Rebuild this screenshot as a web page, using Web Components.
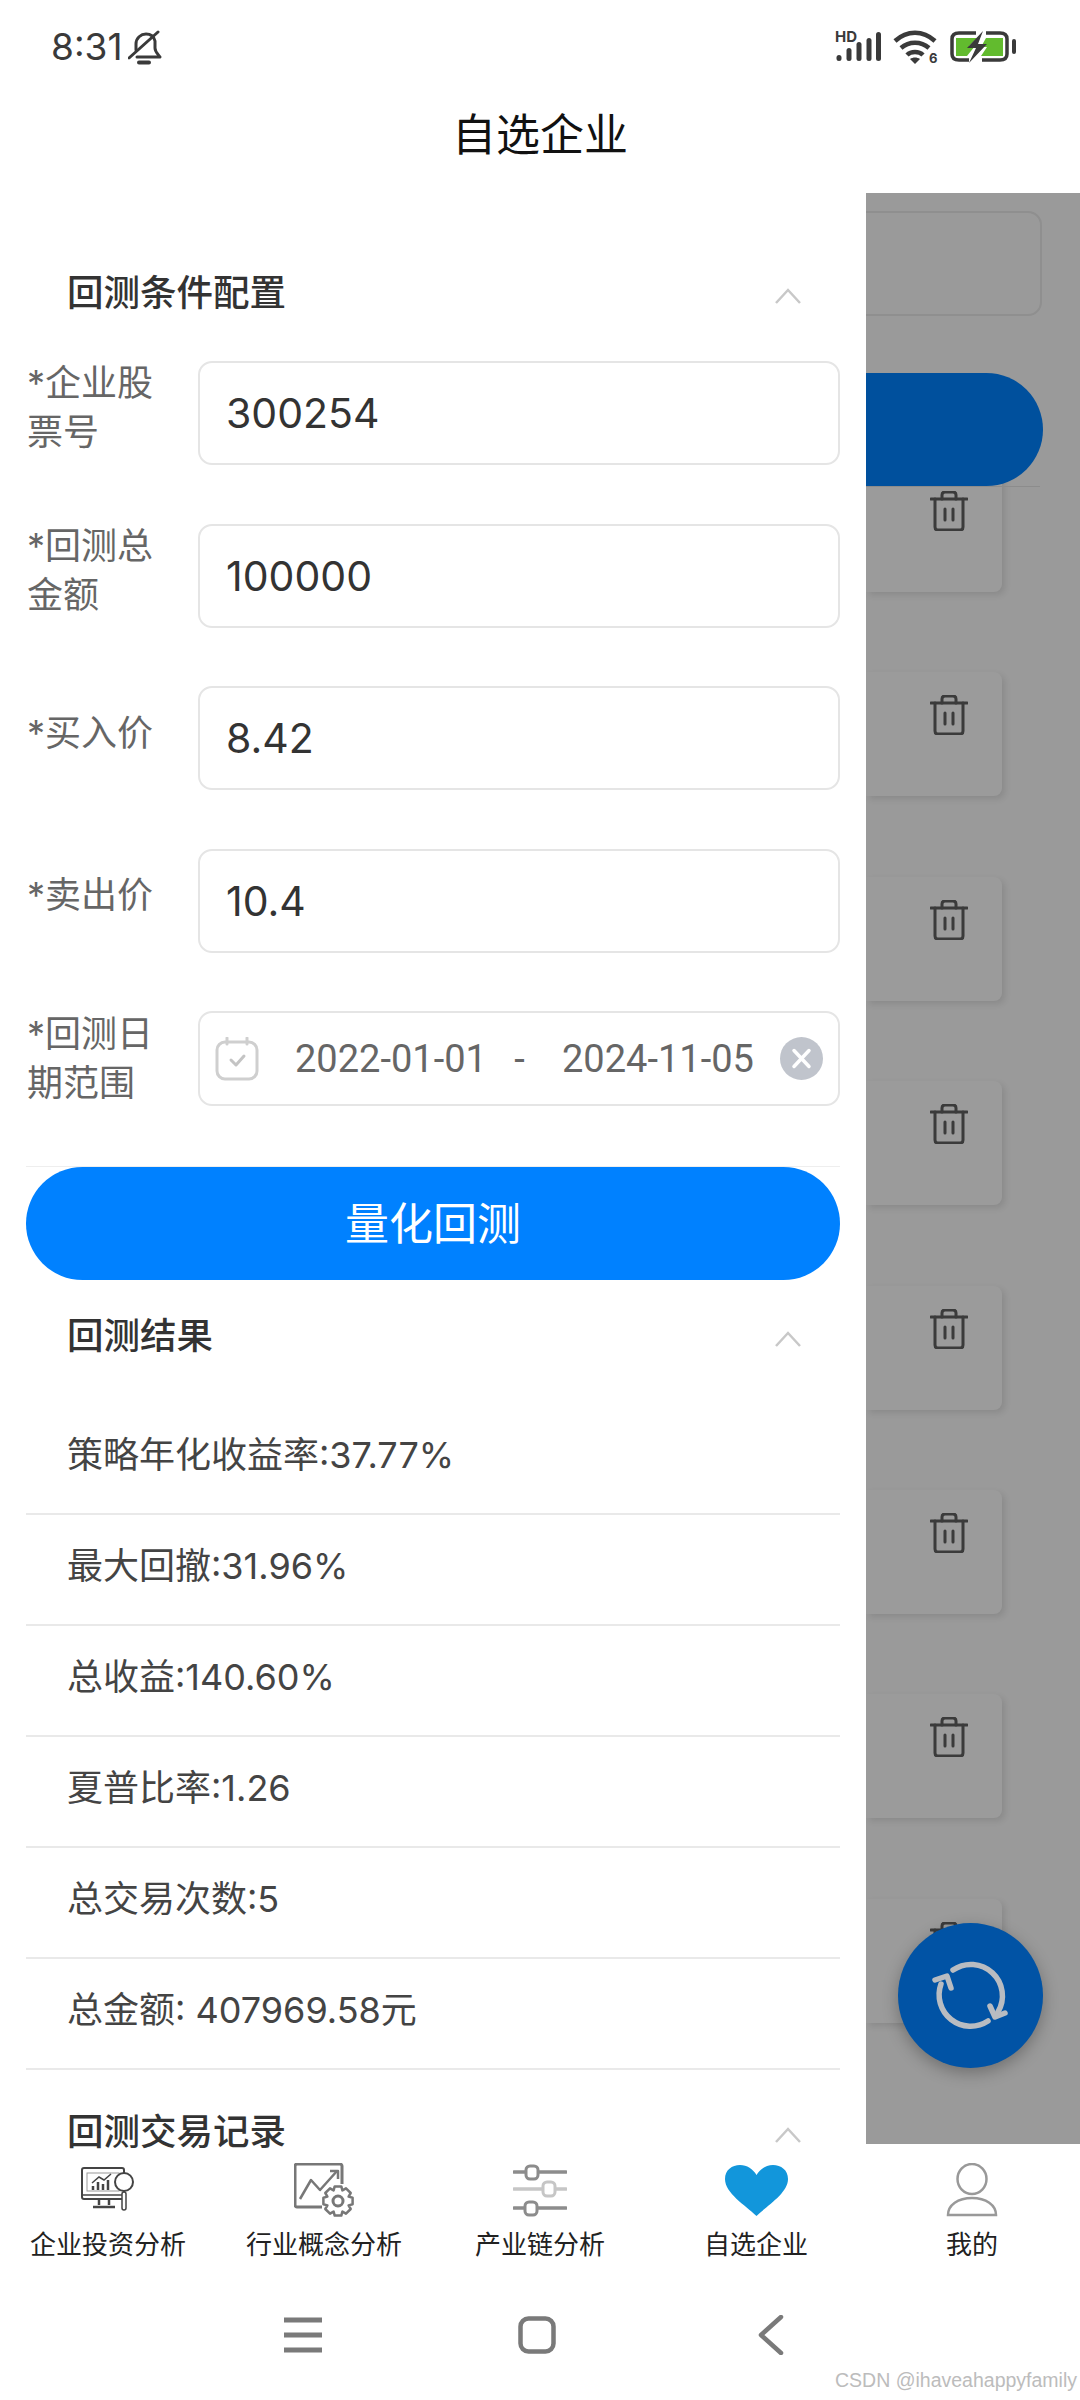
<!DOCTYPE html>
<html lang="zh">
<head>
<meta charset="utf-8">
<title>自选企业</title>
<style>
  html, body { margin: 0; padding: 0; background: #fff; }
  body {
    width: 1080px;
    height: 2400px;
    overflow: hidden;
    display: flex;
    flex-direction: column;
    font-family: Inter, "Noto Sans CJK SC", sans-serif;
  }
</style>
</head>
<body>
  <status-bar></status-bar>
  <page-title>自选企业</page-title>
  <main-area>
    <side-drawer>
      <section-head style="height:100px;margin-top:50px;margin-bottom:18px">回测条件配置</section-head>
      <form-field label="*企业股票号" value="300254"></form-field>
      <form-field label="*回测总金额" value="100000"></form-field>
      <form-field label="*买入价" value="8.42"></form-field>
      <form-field label="*卖出价" value="10.4"></form-field>
      <date-field label="*回测日期范围" start="2022-01-01" end="2024-11-05"></date-field>
      <run-button>量化回测</run-button>
      <section-head style="height:112px;margin-bottom:11.5px">回测结果</section-head>
      <result-row>策略年化收益率:37.77%</result-row>
      <result-row>最大回撤:31.96%</result-row>
      <result-row>总收益:140.60%</result-row>
      <result-row>夏普比率:1.26</result-row>
      <result-row>总交易次数:5</result-row>
      <result-row>总金额: 407969.58元</result-row>
      <section-head style="height:124px">回测交易记录</section-head>
    </side-drawer>
    <dimmed-list></dimmed-list>
    <sync-fab></sync-fab>
  </main-area>
  <tab-bar></tab-bar>
  <nav-bar></nav-bar>

<script>
class StatusBar extends HTMLElement {
  constructor() {
    super();
    this.attachShadow({ mode: "open" });
  }

  connectedCallback() {
    this.shadowRoot.innerHTML = `
      <style>
        :host { display: flex; align-items: flex-start; height: 90px; flex: none; color: #3a3a3a; }
        .time { margin: 25px 0 0 51px; font-size: 37px; line-height: 44px; width: 77px; }
        .bell { margin-top: 30px; }
        .right { margin-left: auto; margin-right: 64px; display: flex; }
        .right svg { margin-top: 28px; display: block; }
      </style>
      <span class="time">8:31</span>
      <svg class="bell" width="34" height="35" viewBox="0 0 34 35" fill="none" stroke="#3a3a3a" stroke-width="3" stroke-linecap="round" stroke-linejoin="round">
        <path d="M8 20V14C8 8 13 4 18 4C23 4 26 7 27 11L27 18C27 22 30 24 32 27H9"/>
        <path d="M1 28L30 2"/>
        <path d="M11 32.5H21" stroke-width="4"/>
      </svg>
      <div class="right">
        <svg width="182" height="38" viewBox="0 0 182 38" fill="none">
          <text x="1" y="14" font-family="Inter, sans-serif" font-size="15" font-weight="700" fill="#3a3a3a">HD</text>
          <g stroke="#3a3a3a" stroke-width="5" stroke-linecap="round">
            <path d="M5 29.5V30.5"/><path d="M15 22.5V30.5"/><path d="M25 16.5V30.5"/><path d="M35 12.5V30.5"/><path d="M44.5 6.5V30.5"/>
          </g>
          <g stroke="#3a3a3a" stroke-width="4.5" stroke-linecap="butt">
            <path d="M61 13C73 2 89 2 101 13"/>
            <path d="M67 20C75 13 87 13 95 20"/>
            <path d="M73 27C77 23 85 23 89 27"/>
          </g>
          <path d="M81 36L76 31C79 29 83 29 86 31Z" fill="#3a3a3a"/>
          <text x="95" y="35" font-family="Inter, sans-serif" font-size="13" font-weight="700" fill="#3a3a3a">6</text>
          <path d="M135 32H125C120 32 118 30 118 26V11C118 7 120 5 125 5H142M152 5H166C171 5 173 7 173 11V26C173 30 171 32 166 32H148" stroke="#3a3a3a" stroke-width="3.5"/>
          <path d="M122 10H143L135 18H141L133 28H122Z" fill="#62bb2e"/>
          <path d="M152 10H169V28H147L153 19H147Z" fill="#62bb2e"/>
          <path d="M149 3L133 20H142L135 35L153 16H144Z" fill="#3a3a3a"/>
          <path d="M180 13V24" stroke="#3a3a3a" stroke-width="4" stroke-linecap="round"/>
        </svg>
      </div>
    `;
  }
}

class PageTitle extends HTMLElement {
  constructor() {
    super();
    this.attachShadow({ mode: "open" });
  }

  connectedCallback() {
    this.shadowRoot.innerHTML = `
      <style>
        :host { display: block; flex: none; height: 103px; box-sizing: border-box; padding-top: 20px; text-align: center; font-size: 44px; line-height: 50px; color: #111; }
      </style>
      <slot></slot>
    `;
  }
}

class MainArea extends HTMLElement {
  constructor() {
    super();
    this.attachShadow({ mode: "open" });
  }

  connectedCallback() {
    this.shadowRoot.innerHTML = `
      <style>
        :host { display: flex; position: relative; flex: none; height: 1951px; }
      </style>
      <slot></slot>
    `;
  }
}

class SideDrawer extends HTMLElement {
  constructor() {
    super();
    this.attachShadow({ mode: "open" });
  }

  connectedCallback() {
    this.shadowRoot.innerHTML = `
      <style>
        :host { display: flex; flex-direction: column; flex: none; width: 866px; height: 1951px; background: #fff; }
      </style>
      <slot></slot>
    `;
  }
}

class SectionHead extends HTMLElement {
  constructor() {
    super();
    this.attachShadow({ mode: "open" });
  }

  connectedCallback() {
    this.shadowRoot.innerHTML = `
      <style>
        :host { display: flex; align-items: center; flex: none; width: 840px; box-sizing: border-box; padding: 0 0 5px 67px; font-size: 36.5px; font-weight: 500; color: #333; }
        svg { margin: 11px 39px 0 auto; }
      </style>
      <slot></slot>
      <svg width="26" height="16" viewBox="0 0 26 16" fill="none" stroke="#c8c8c8" stroke-width="2.5"><path d="M1 15L13 2L25 15"/></svg>
    `;
  }
}

class FormField extends HTMLElement {
  constructor() {
    super();
    this.attachShadow({ mode: "open" });
  }

  connectedCallback() {
    this.shadowRoot.innerHTML = `
      <style>
        :host { display: flex; align-items: center; flex: none; height: 104px; margin-bottom: 58.6px; padding-left: 27px; }
        .label { width: 151px; margin-right: 20px; margin-top: -10px; font-size: 36px; line-height: 49px; color: #666; }
        .box { box-sizing: border-box; width: 642px; height: 104px; display: flex; align-items: center; padding-left: 26px; border: 2px solid #e5e5e5; border-radius: 14px; font-size: 41px; color: #333; }
      </style>
      <div class="label">${this.getAttribute("label")}</div>
      <div class="box">${this.getAttribute("value")}</div>
    `;
  }
}

class DateField extends HTMLElement {
  constructor() {
    super();
    this.attachShadow({ mode: "open" });
  }

  connectedCallback() {
    this.shadowRoot.innerHTML = `
      <style>
        :host { display: flex; align-items: center; flex: none; height: 95px; margin-bottom: 60px; padding-left: 27px; }
        .label { width: 151px; margin-right: 20px; font-size: 36px; line-height: 49px; color: #666; }
        .box { box-sizing: border-box; width: 642px; height: 95px; display: flex; align-items: center; padding: 0 15px; border: 2px solid #e5e5e5; border-radius: 14px; font-family: Roboto, sans-serif; font-size: 38px; color: #666; }
        .cal { flex: none; margin-right: 36px; }
        .day { flex: none; width: 192px; white-space: nowrap; }
        .dash { flex: none; box-sizing: border-box; width: 75px; padding-right: 10px; text-align: center; }
        .clear { flex: none; margin-left: auto; margin-right: 0; }
      </style>
      <div class="label">${this.getAttribute("label")}</div>
      <div class="box">
        <svg class="cal" width="44" height="44" viewBox="0 0 44 44" fill="none" stroke="#cfcfcf" stroke-width="3" stroke-linecap="round" stroke-linejoin="round">
          <rect x="2" y="5" width="40" height="37" rx="8"/>
          <path d="M12 1V7M32 1V7"/>
          <path d="M16 23L21 28L29 19" stroke="#c4c4c4"/>
        </svg>
        <span class="day">${this.getAttribute("start")}</span>
        <span class="dash">-</span>
        <span class="day">${this.getAttribute("end")}</span>
        <svg class="clear" width="43" height="43" viewBox="0 0 43 43">
          <circle cx="21.5" cy="21.5" r="21.5" fill="#c0c4cc"/>
          <path d="M14 13.5L29 29.5M29 13.5L14 29.5" stroke="#fff" stroke-width="3.5" stroke-linecap="round"/>
        </svg>
      </div>
    `;
  }
}

class RunButton extends HTMLElement {
  constructor() {
    super();
    this.attachShadow({ mode: "open" });
  }

  connectedCallback() {
    this.shadowRoot.innerHTML = `
      <style>
        :host { display: block; flex: none; width: 814px; margin-left: 26px; border-top: 1px solid #eee; }
        div { box-sizing: border-box; height: 113px; padding-bottom: 6px; border-radius: 57px; background: #0081ff; color: #fff; font-size: 44px; display: flex; align-items: center; justify-content: center; }
      </style>
      <div><slot></slot></div>
    `;
  }
}

class ResultRow extends HTMLElement {
  constructor() {
    super();
    this.attachShadow({ mode: "open" });
  }

  connectedCallback() {
    this.shadowRoot.innerHTML = `
      <style>
        :host { display: flex; align-items: center; flex: none; box-sizing: border-box; width: 814px; height: 111px; margin-left: 26px; padding: 0 0 12px 41px; border-bottom: 2px solid #e9e9e9; font-size: 36px; color: #444; white-space: nowrap; }
      </style>
      <slot></slot>
    `;
  }
}

class DimmedList extends HTMLElement {
  constructor() {
    super();
    this.attachShadow({ mode: "open" });
  }

  connectedCallback() {
    const trash = `
      <svg width="38" height="40" viewBox="0 0 38 40" fill="none" stroke="#3b3b3b" stroke-width="3" stroke-linejoin="round" stroke-linecap="round">
        <path d="M1 8H37"/>
        <path d="M12 8V4C12 2 13 1 15 1H23C25 1 26 2 26 4V8"/>
        <path d="M5 8V36C5 38 6 39 8 39H30C32 39 33 38 33 36V8"/>
        <path d="M15 18V29M23 18V29"/>
      </svg>`;
    const cards = Array.from({ length: 8 }, () => `<div class="card">${trash}</div>`).join("");

    this.shadowRoot.innerHTML = `
      <style>
        :host { display: block; flex: 1; height: 1951px; overflow: hidden; background: #9a9a9a; padding-top: 18px; box-sizing: border-box; }
        .search { box-sizing: border-box; height: 105px; margin: 0 38px 57px -20px; border: 2px solid #8f8f8f; border-radius: 14px; }
        .btn { position: relative; z-index: 1; height: 113px; margin-right: 37px; margin-left: -70px; border-radius: 57px; background: #00509d; }
        .rule { position: relative; z-index: 1; height: 1px; margin-right: 40px; background: #8c8c8c; }
        .cards { display: flex; flex-direction: column; gap: 80.4px; margin-top: -19px; margin-right: 78px; }
        .card { box-sizing: border-box; flex: none; height: 124px; padding: 23px 34px 0 0; display: flex; justify-content: flex-end; background: #9b9b9b; border-radius: 0 8px 8px 0; box-shadow: 3px 3px 6px rgba(0,0,0,0.10); }
      </style>
      <div class="search"></div>
      <div class="btn"></div>
      <div class="rule"></div>
      <div class="cards">${cards}</div>
    `;
  }
}

class SyncFab extends HTMLElement {
  constructor() {
    super();
    this.attachShadow({ mode: "open" });
  }

  connectedCallback() {
    this.shadowRoot.innerHTML = `
      <style>
        :host { position: absolute; left: 898px; top: 1730px; width: 145px; height: 145px; border-radius: 50%; background: #0153a5; box-shadow: 0 5px 16px rgba(0,0,0,0.28); display: flex; align-items: center; justify-content: center; }
      </style>
      <svg width="84" height="84" viewBox="-42 -42 84 84" fill="none" stroke="#b9bcc1" stroke-width="5.5" stroke-linecap="round" stroke-linejoin="round">
        <path d="M-18 -26A31.5 31.5 0 0 1 27 16"/>
        <path d="M17 25A31.5 31.5 0 0 1 -30 -12"/>
        <path d="M19 10L24 21L34 17"/>
        <path d="M-36 -16L-24 -20L-20 -8"/>
      </svg>
    `;
  }
}

// builds an outlined cog as a path, used by the industry tab icon
function gearPath(cx, cy, outer, inner, teeth) {
  const pts = [];
  const step = (Math.PI * 2) / teeth;
  for (let i = 0; i < teeth; i++) {
    const a = i * step - Math.PI / 2;
    [[-0.5, inner], [-0.28, outer], [0.28, outer], [0.5, inner]].forEach(([k, r]) => {
      const t = a + k * step;
      pts.push((cx + Math.cos(t) * r).toFixed(1) + " " + (cy + Math.sin(t) * r).toFixed(1));
    });
  }
  return "M" + pts.join("L") + "Z";
}

const TAB_ICONS = {
  monitor: `
    <svg width="54" height="46" viewBox="0 0 54 46" fill="none" stroke="#444" stroke-width="2">
      <rect x="1" y="1" width="42" height="31" rx="2"/>
      <path d="M1 28H43" stroke-width="1.5"/>
      <rect x="6" y="6" width="32" height="18" stroke="#999" stroke-width="1"/>
      <path d="M18 32V38M28 32V38M12 40H34" stroke-width="2.5"/>
      <path d="M12 23V19M17 23V15M22 23V17M27 23V13" stroke-width="2.5"/>
      <path d="M11 16L18 10L23 13L30 7" stroke-width="1.5"/>
      <circle cx="43" cy="15" r="9" fill="#fff" stroke-width="2"/>
      <rect x="41" y="25" width="4" height="18" rx="2" fill="#fff" stroke-width="1.5"/>
    </svg>`,
  gearChart: `
    <svg width="60" height="54" viewBox="0 0 60 54" fill="none" stroke="#777" stroke-width="3" stroke-linejoin="round">
      <path d="M28 44H3C2 44 1 43 1 42V3C1 2 2 1 3 1H46C47 1 48 2 48 3V21"/>
      <path d="M6 36L17 17L26 27L43 8" stroke-width="2.5"/>
      <path d="M36 8H44V16" stroke-width="2.5"/>
      <path d="${gearPath(44, 38, 15, 11.5, 8)}" fill="#fff" stroke-width="2.5"/>
      <circle cx="44" cy="38" r="5" stroke-width="3"/>
    </svg>`,
  sliders: `
    <svg width="54" height="54" viewBox="0 0 54 54" fill="none" stroke-width="3.5" stroke-linecap="round">
      <g stroke="#8c8c8c">
        <path d="M1 9H12M26 9H53"/>
        <rect x="13" y="3" width="12" height="13" rx="4" fill="#fff" stroke-width="3"/>
        <path d="M1 45H11M25 45H53"/>
        <rect x="12" y="39" width="12" height="13" rx="4" fill="#fff" stroke-width="3"/>
      </g>
      <g stroke="#c6c6c6">
        <path d="M1 26H29M43 26H53"/>
        <rect x="30" y="19" width="12" height="14" rx="4" fill="#fff" stroke-width="3"/>
      </g>
    </svg>`,
  heart: `
    <svg width="63" height="51" viewBox="0 0 63 51">
      <path d="M31.5 51C20 40 0 28 0 14C0 5 7 0 15 0C22 0 28 4 31.5 10C35 4 41 0 48 0C56 0 63 5 63 14C63 28 43 40 31.5 51Z" fill="#1296db"/>
    </svg>`,
  person: `
    <svg width="52" height="54" viewBox="0 0 52 54" fill="none" stroke="#999" stroke-width="2.5">
      <ellipse cx="26" cy="16" rx="14.5" ry="15"/>
      <path d="M2 52C2 42 12 35 26 35C40 35 50 42 50 52Z"/>
    </svg>`
};

class TabBar extends HTMLElement {
  constructor() {
    super();
    this.attachShadow({ mode: "open" });
  }

  connectedCallback() {
    const tabs = [
      ["monitor", "企业投资分析"],
      ["gearChart", "行业概念分析"],
      ["sliders", "产业链分析"],
      ["heart", "自选企业"],
      ["person", "我的"]
    ];
    this.shadowRoot.innerHTML = `
      <style>
        :host { display: grid; grid-template-columns: repeat(5, 216px); flex: none; height: 136px; background: #fff; }
        .tab { display: flex; flex-direction: column; align-items: center; padding-top: 19px; }
        .icon { height: 54px; display: flex; align-items: center; justify-content: center; }
        .name { margin-top: 12px; font-size: 26px; line-height: 32px; color: #222; white-space: nowrap; }
      </style>
      ${tabs.map(([icon, name]) => `
        <div class="tab">
          <div class="icon">${TAB_ICONS[icon]}</div>
          <div class="name">${name}</div>
        </div>`).join("")}
    `;
  }
}

class NavBar extends HTMLElement {
  constructor() {
    super();
    this.attachShadow({ mode: "open" });
  }

  connectedCallback() {
    this.shadowRoot.innerHTML = `
      <style>
        :host { display: grid; grid-template-columns: repeat(3, 234px); justify-content: center; position: relative; flex: none; height: 120px; padding-right: 6px; background: #fff; }
        .key { display: flex; align-items: center; justify-content: center; height: 110px; }
        .mark { position: absolute; right: 3px; bottom: 8px; font-family: "Liberation Sans", sans-serif; font-size: 19.5px; color: #bcbcbc; white-space: nowrap; }
      </style>
      <div class="key">
        <svg width="38" height="36" viewBox="0 0 38 36" stroke="#7a7a7a" stroke-width="5"><path d="M0 3H38M0 18H38M0 33H38"/></svg>
      </div>
      <div class="key">
        <svg width="38" height="38" viewBox="0 0 38 38" fill="none" stroke="#7a7a7a" stroke-width="4.5"><rect x="2.5" y="2.5" width="33" height="33" rx="8"/></svg>
      </div>
      <div class="key">
        <svg width="26" height="40" viewBox="0 0 26 40" fill="none" stroke="#7a7a7a" stroke-width="4.5" stroke-linecap="round" stroke-linejoin="round"><path d="M23 2L3 20L23 38"/></svg>
      </div>
      <span class="mark">CSDN @ihaveahappyfamily</span>
    `;
  }
}

customElements.define("status-bar", StatusBar);
customElements.define("page-title", PageTitle);
customElements.define("main-area", MainArea);
customElements.define("side-drawer", SideDrawer);
customElements.define("section-head", SectionHead);
customElements.define("form-field", FormField);
customElements.define("date-field", DateField);
customElements.define("run-button", RunButton);
customElements.define("result-row", ResultRow);
customElements.define("dimmed-list", DimmedList);
customElements.define("sync-fab", SyncFab);
customElements.define("tab-bar", TabBar);
customElements.define("nav-bar", NavBar);
</script>
</body>
</html>
